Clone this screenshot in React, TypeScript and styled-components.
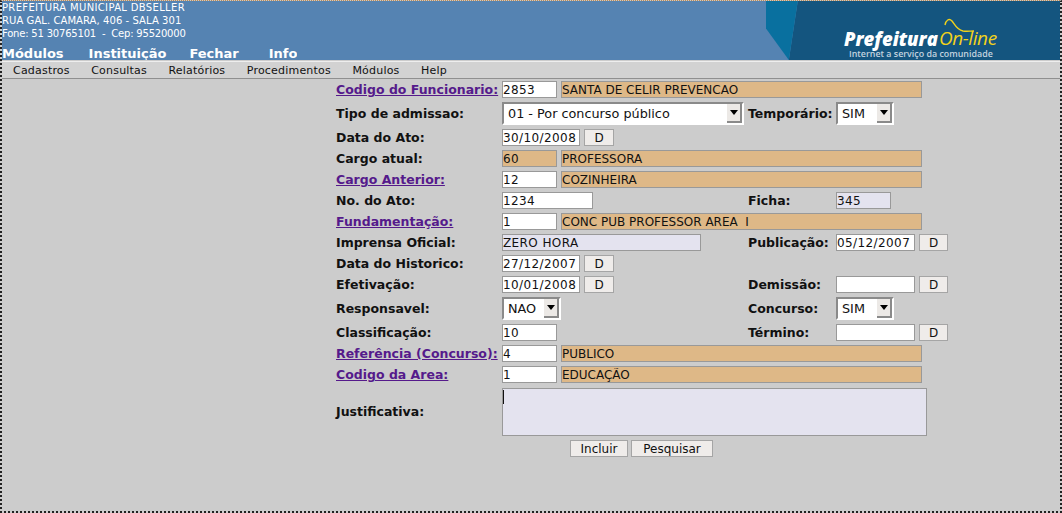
import styled, { createGlobalStyle } from 'styled-components'

const GlobalStyle = createGlobalStyle`
  html, body {
    margin: 0;
    padding: 0;
    height: 100%;
    background: #cccccc;
  }
  body {
    font-family: "DejaVu Sans", sans-serif;
    overflow: hidden;
  }
`

const App = () => {
  return (
    <Page>
      <GlobalStyle />
      <Header>
        <HeaderInfo>
          <Address>
            <AddressLine $spacing={0.34}>PREFEITURA MUNICIPAL DBSELLER</AddressLine>
            <AddressLine $spacing={0.07}>RUA GAL. CAMARA, 406 - SALA 301</AddressLine>
            <AddressLine $spacing={-0.2}>Fone: 51 30765101 &nbsp;-&nbsp; Cep: 95520000</AddressLine>
          </Address>
          <TopNav>
            <span>Módulos</span>
            <span>Instituição</span>
            <span>Fechar</span>
            <span>Info</span>
          </TopNav>
        </HeaderInfo>
        <Banner>
          <BannerShape viewBox="0 0 296 60" preserveAspectRatio="none">
            <polygon points="32,0 296,0 296,60 23,60" fill="#14557f" />
            <polygon points="0,0 32,0 23,60 0,28" fill="#09709f" />
          </BannerShape>
          <Logo>
            <LogoTitle>
              <b>Prefeitura</b>
              <i>On-line</i>
              <Swoosh viewBox="0 0 31 16">
                <path d="M1 7 C2 2 5 0 8 3 C11 7 13 12 19 13 C23 13.5 26 13 30 13" fill="none" stroke="#f2d21b" strokeWidth="1.4" />
              </Swoosh>
            </LogoTitle>
            <LogoTagline>Internet a serviço da comunidade</LogoTagline>
          </Logo>
        </Banner>
      </Header>

      <MenuBar>
        <span>Cadastros</span>
        <span>Consultas</span>
        <span>Relatórios</span>
        <span>Procedimentos</span>
        <span>Módulos</span>
        <span>Help</span>
      </MenuBar>

      <Form>
        <LinkLabel>Codigo do Funcionario:</LinkLabel>
        <Wide>
          <Field $w={55} $spaced defaultValue="2853" />
          <Field $w={361} $tone="locked" defaultValue="SANTA DE CELIR PREVENCAO" />
        </Wide>

        <Label>Tipo de admissao:</Label>
        <Cell>
          <Dropdown w={242} value="01 - Por concurso público" />
        </Cell>
        <Label>Temporário:</Label>
        <Cell>
          <Dropdown w={58} value="SIM" />
        </Cell>

        <Label>Data do Ato:</Label>
        <Wide>
          <Field $w={78} $spaced defaultValue="30/10/2008" />
          <SmallButton $w={30}>D</SmallButton>
        </Wide>

        <Label>Cargo atual:</Label>
        <Wide>
          <Field $w={55} $tone="locked" $spaced defaultValue="60" />
          <Field $w={361} $tone="locked" defaultValue="PROFESSORA" />
        </Wide>

        <LinkLabel>Cargo Anterior:</LinkLabel>
        <Wide>
          <Field $w={55} $spaced defaultValue="12" />
          <Field $w={361} $tone="locked" defaultValue="COZINHEIRA" />
        </Wide>

        <Label>No. do Ato:</Label>
        <Cell>
          <Field $w={91} $spaced defaultValue="1234" />
        </Cell>
        <Label>Ficha:</Label>
        <Cell>
          <Field $w={55} $tone="soft" $spaced defaultValue="345" />
        </Cell>

        <LinkLabel>Fundamentação:</LinkLabel>
        <Wide>
          <Field $w={55} $spaced defaultValue="1" />
          <Field $w={361} $tone="locked" defaultValue="CONC PUB PROFESSOR AREA  I" />
        </Wide>

        <Label>Imprensa Oficial:</Label>
        <Cell>
          <Field $w={199} $tone="soft" $spaced defaultValue="ZERO HORA" />
        </Cell>
        <Label>Publicação:</Label>
        <Cell>
          <Field $w={79} $spaced defaultValue="05/12/2007" />
          <SmallButton $w={29}>D</SmallButton>
        </Cell>

        <Label>Data do Historico:</Label>
        <Wide>
          <Field $w={78} $spaced defaultValue="27/12/2007" />
          <SmallButton $w={30}>D</SmallButton>
        </Wide>

        <Label>Efetivação:</Label>
        <Cell>
          <Field $w={78} $spaced defaultValue="10/01/2008" />
          <SmallButton $w={30}>D</SmallButton>
        </Cell>
        <Label>Demissão:</Label>
        <Cell>
          <Field $w={79} />
          <SmallButton $w={29}>D</SmallButton>
        </Cell>

        <Label>Responsavel:</Label>
        <Cell>
          <Dropdown w={59} value="NAO" />
        </Cell>
        <Label>Concurso:</Label>
        <Cell>
          <Dropdown w={58} value="SIM" />
        </Cell>

        <Label>Classificação:</Label>
        <Cell>
          <Field $w={55} $spaced defaultValue="10" />
        </Cell>
        <Label>Término:</Label>
        <Cell>
          <Field $w={79} />
          <SmallButton $w={29}>D</SmallButton>
        </Cell>

        <LinkLabel>Referência (Concurso):</LinkLabel>
        <Wide>
          <Field $w={55} $spaced defaultValue="4" />
          <Field $w={361} $tone="locked" defaultValue="PUBLICO" />
        </Wide>

        <LinkLabel>Codigo da Area:</LinkLabel>
        <Wide>
          <Field $w={55} $spaced defaultValue="1" />
          <Field $w={361} $tone="locked" defaultValue="EDUCAÇÃO" />
        </Wide>

        <Label>Justificativa:</Label>
        <Wide>
          <NotesBox>
            <Notes />
            <Caret />
          </NotesBox>
        </Wide>
      </Form>

      <Actions>
        <SmallButton $w={58}>Incluir</SmallButton>
        <SmallButton $w={82}>Pesquisar</SmallButton>
      </Actions>
    </Page>
  )
}

const Dropdown = ({ w, value }: { w: number; value: string }) => (
  <SelectWrap $w={w}>
    <Select defaultValue={value}>
      <option>{value}</option>
    </Select>
    <SelectArrow>
      <svg width="8" height="5" viewBox="0 0 8 5">
        <polygon points="0,0 8,0 4,5" fill="#000" />
      </svg>
    </SelectArrow>
  </SelectWrap>
)

export default App

const Page = styled.div`
  box-sizing: border-box;
  width: 1062px;
  height: 513px;
  background: #cccccc;
  border-style: dotted;
  border-color: #222;
  border-width: 1px 2px 2px 2px;
  border-top-color: #c08a50;
`

const Header = styled.div`
  display: flex;
  justify-content: space-between;
  height: 59px;
  background: #5583b2;
`

const HeaderInfo = styled.div`
  display: flex;
  flex-direction: column;
  justify-content: space-between;
  color: #fff;
`

const Address = styled.div`
  font-size: 10px;
  line-height: 13px;
`

const AddressLine = styled.div<{ $spacing: number }>`
  letter-spacing: ${(p) => p.$spacing}px;
  white-space: nowrap;
`

const TopNav = styled.div`
  display: flex;
  gap: 23px;
  font-size: 13px;
  font-weight: 700;
  line-height: 13px;
  height: 13px;
  overflow: hidden;

  span:first-child {
    margin-right: 2px;
  }

  span:last-child {
    margin-left: 7px;
  }
`

const Banner = styled.div`
  position: relative;
  width: 294px;
  display: flex;
  justify-content: flex-end;
`

const BannerShape = styled.svg`
  position: absolute;
  inset: 0;
  width: 100%;
  height: 100%;
`

const Logo = styled.div`
  position: relative;
  width: 216px;
  padding-top: 27px;
  box-sizing: border-box;
`

const LogoTitle = styled.div`
  position: relative;
  display: flex;
  height: 21px;
  align-items: center;
  line-height: 21px;

  b {
    font-family: "Open Sans", sans-serif;
    font-style: italic;
    font-weight: 800;
    font-size: 18.5px;
    color: #fff;
  }

  i {
    font-family: "Open Sans", sans-serif;
    font-weight: 400;
    font-size: 19px;
    letter-spacing: -0.4px;
    margin-left: 1px;
    color: #f2d21b;
  }
`

const Swoosh = styled.svg`
  position: absolute;
  left: 100px;
  top: -10px;
  width: 31px;
  height: 16px;
`

const LogoTagline = styled.div`
  font-family: "Open Sans", sans-serif;
  font-size: 8.9px;
  font-weight: 600;
  line-height: 10px;
  color: #c3d3df;
  padding-left: 5px;
  white-space: nowrap;
`

const MenuBar = styled.div`
  display: flex;
  gap: 21.5px;
  height: 16px;
  align-items: center;
  padding-left: 11px;
  margin-top: 1px;
  background: #d2d2d2;
  border-top: 1px solid #eee;
  border-bottom: 1px solid #8f8f8f;
  font-size: 11px;
  letter-spacing: 0.2px;
  color: #111;
`

const Form = styled.div`
  display: grid;
  grid-template-columns: 166px 246px 88px 1fr;
  row-gap: 4px;
  align-items: center;
  padding: 2px 0 0 334px;
`

const Cell = styled.div`
  display: flex;
  align-items: center;
  gap: 4px;
`

const Wide = styled(Cell)`
  grid-column: 2 / span 3;
`

const Label = styled.div`
  font-size: 12.5px;
  font-weight: 700;
  color: #111;
  white-space: nowrap;
`

const LinkLabel = styled(Label)`
  color: #551a8b;
  text-decoration: underline;
`

const tones = {
  plain: '#ffffff',
  locked: '#deb887',
  soft: '#e4e3ef',
}

const Field = styled.input<{ $w: number; $tone?: keyof typeof tones; $spaced?: boolean }>`
  box-sizing: border-box;
  width: ${(p) => p.$w}px;
  height: 17px;
  padding: 1px 0 0 0;
  margin: 0;
  border: 1px solid #999;
  border-radius: 0;
  outline: none;
  background: ${(p) => tones[p.$tone ?? 'plain']};
  font-family: "DejaVu Sans", sans-serif;
  font-size: 12px;
  letter-spacing: ${(p) => (p.$spaced ? '0.4px' : '0')};
  color: #111;
`

const SmallButton = styled.button<{ $w: number }>`
  box-sizing: border-box;
  width: ${(p) => p.$w}px;
  height: 17px;
  padding: 0;
  margin: 0;
  border: 1px solid #a5a5a5;
  border-radius: 0;
  background: #efecea;
  font-family: "DejaVu Sans", sans-serif;
  font-size: 12px;
  color: #111;
`

const SelectWrap = styled.div<{ $w: number }>`
  position: relative;
  width: ${(p) => p.$w}px;
  height: 23px;
`

const Select = styled.select`
  appearance: none;
  box-sizing: border-box;
  width: 100%;
  height: 100%;
  margin: 0;
  padding: 0 0 0 4px;
  border-style: solid;
  border-width: 2px;
  border-color: #8a8a8a #fff #fff #8a8a8a;
  border-radius: 0;
  outline: none;
  background: #fff;
  font-family: "DejaVu Sans", sans-serif;
  font-size: 12.8px;
  color: #111;
`

const SelectArrow = styled.span`
  position: absolute;
  top: 2px;
  right: 2px;
  box-sizing: border-box;
  display: flex;
  align-items: center;
  justify-content: center;
  width: 15px;
  height: 19px;
  background: #ece9e6;
  border-right: 2px solid #8a8a8a;
  border-bottom: 2px solid #8a8a8a;
`

const NotesBox = styled.div`
  position: relative;
  margin-top: 1px;
`

const Notes = styled.textarea`
  display: block;
  box-sizing: border-box;
  width: 425px;
  height: 48px;
  margin: 0;
  padding: 0;
  resize: none;
  border: 1px solid #999;
  border-radius: 0;
  outline: none;
  background: #e4e3ef;
`

const Caret = styled.span`
  position: absolute;
  left: 1px;
  top: 2px;
  width: 1px;
  height: 14px;
  background: #111;
`

const Actions = styled.div`
  display: flex;
  gap: 3px;
  padding: 4px 0 0 568px;
`
